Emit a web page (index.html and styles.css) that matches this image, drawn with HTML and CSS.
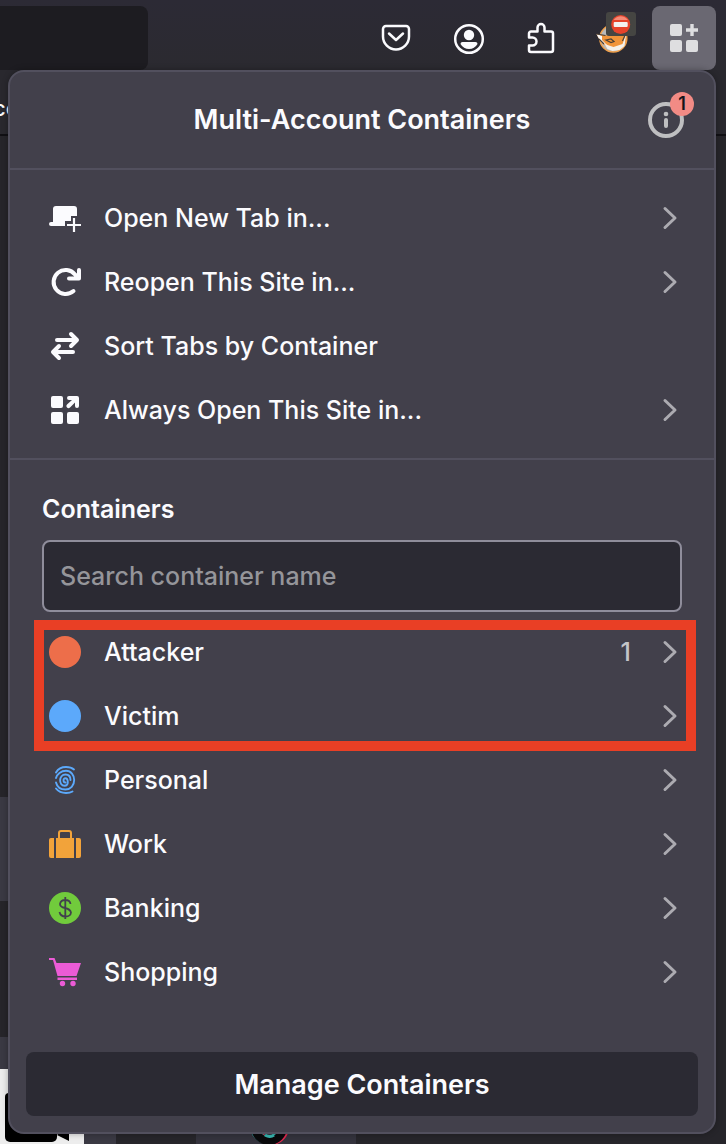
FILE: index.html
```html
<!DOCTYPE html>
<html lang="en">
<head>
<meta charset="utf-8">
<meta name="viewport" content="width=device-width, initial-scale=1">
<title>Multi-Account Containers</title>
<link rel="stylesheet" href="styles.css">
</head>
<body>
<svg class="defs" aria-hidden="true">
  <symbol id="chevron" viewBox="0 0 16 24"><path d="M3 2.500 L13 12 L3 21.500" fill="none" stroke="currentColor" stroke-width="3" stroke-linecap="round" stroke-linejoin="round"/></symbol>
</svg>
<div class="browser">
  <header class="toolbar">
    <div class="urlbar"></div>
    <nav class="tools" aria-label="Toolbar">
      <button class="tool" aria-label="Save to Pocket">
        <svg width="32" height="32" viewBox="0 0 32 32" fill="none" stroke="currentColor" stroke-width="2.500" stroke-linecap="round" stroke-linejoin="round"><path d="M6 4H26a3 3 0 0 1 3 3V14.500a13 13 0 0 1-26 0V7a3 3 0 0 1 3-3Z"/><path d="M9 11.500l7 6.500 7-6.500"/></svg>
      </button>
      <button class="tool" aria-label="Account">
        <svg width="32" height="32" viewBox="-1 -1 32 32"><circle cx="16" cy="16" r="13.800" fill="none" stroke="currentColor" stroke-width="2.500"/><circle cx="16" cy="12" r="5.200" fill="currentColor"/><path d="M9.500 19H22.500a2 2 0 0 1 2 2Q21.500 26 16 26T7.500 21a2 2 0 0 1 2-2Z" fill="currentColor"/></svg>
      </button>
      <button class="tool" aria-label="Extensions">
        <svg width="32" height="32" viewBox="-1 -1 32 32" fill="none" stroke="currentColor" stroke-width="2.500" stroke-linejoin="round"><path d="M6 8.500H12.500V4.500a3.500 3.500 0 0 1 7 0V8.500H26a2 2 0 0 1 2 2V27a2 2 0 0 1-2 2H6a2 2 0 0 1-2-2V22.500H7.500a4 4 0 0 0 0-8H4V10.500a2 2 0 0 1 2-2Z"/></svg>
      </button>
      <button class="tool" aria-label="FoxyProxy">
        <svg width="44" height="44" viewBox="0 0 44 44"><circle cx="23.300" cy="22.500" r="13.500" fill="#b9b9b9" stroke="#f0a04b" stroke-width="1.500"/><path d="M6.500 18L17 19.500 29 17 36.500 16 36 26 31 30 21 32 14 29 10 25z" fill="#f0943a"/><path d="M6.500 18l5.500 2 0 4 6 6-7-4-3-5z" fill="#fafafa"/><path d="M36.500 16l-4 12-9 3-9-3 3 5 5 2 7-1 5-4z" fill="#f4f0ea"/><path d="M6.500 18l9 1.500M9 23l5 5M16 24l5-1 3 2.500-3 1zM36.500 16l-4 9" fill="none" stroke="#4b4036" stroke-width="1.200"/><rect x="16" y="-4" width="30" height="24" rx="3" fill="#454542"/><circle cx="30.700" cy="8.500" r="9.500" fill="#e6432b"/><path d="M23.500 4a9 9 0 0 1 14.500 0z" fill="#f68a76"/><rect x="23.700" y="6" width="14" height="5" rx="1" fill="#f3f1f0"/></svg>
      </button>
      <button class="tool tool-active" aria-label="Multi-Account Containers">
        <svg width="32" height="32" viewBox="0 0 32 32" fill="#dedee0"><rect x="2" y="2" width="12" height="12" rx="2"/><rect x="2" y="18" width="12" height="12" rx="2"/><rect x="18" y="18" width="12" height="12" rx="2"/><path d="M22.300 2h3.400v4.300H30v3.400h-4.300V14h-3.400V9.700H18V6.300h4.300z"/></svg>
      </button>
    </nav>
  </header>
  <div class="bookmarks">cc</div>
  <main class="page">
    <div class="band band-a"></div>
    <div class="band band-b"></div>
    <div class="band band-c"></div>
    <div class="tiles">
      <div class="thumb"><svg width="84" height="75" viewBox="0 0 84 75"><rect x="5" y="24" width="52" height="18" rx="4"/><rect x="5" y="34" width="52" height="39" rx="5"/><path d="M57 66l12-12v18z"/></svg></div>
      <div class="tile-logo"><svg width="40" height="75" viewBox="0 0 40 75" fill="none" stroke-width="8"><circle cx="21" cy="58" r="14" stroke="#e0284f"/><circle cx="18" cy="57" r="14" stroke="#38b8b2"/><circle cx="19" cy="58" r="14" stroke="#09090b"/><path d="M15 66q5 3 9 0" stroke="#38b8b2" stroke-width="3"/></svg></div>
    </div>
  </main>
</div>

<section class="panel" aria-labelledby="title">
  <header class="panel-head">
    <h1 id="title">Multi-Account Containers</h1>
    <button class="info" aria-label="What's new">
      <svg width="36" height="36" viewBox="0 0 36 36"><circle cx="18" cy="18" r="16" fill="none" stroke="currentColor" stroke-width="4"/><circle cx="18" cy="12" r="2.300" fill="currentColor"/><rect x="16" y="16" width="4" height="10" rx="2" fill="currentColor"/></svg>
      <span class="badge">1</span>
    </button>
  </header>
  <nav class="menu">
    <button class="row"><svg class="icon" viewBox="0 0 32 32"><path d="M7 4H25a3 3 0 0 1 3 3V14H22V19H16V24H2a2 2 0 0 1 0-4H4V7a3 3 0 0 1 3-3Z" fill="currentColor"/><path d="M25 16V30M18 23H32" stroke="currentColor" stroke-width="2.200"/></svg><span class="label">Open New Tab in...</span><svg class="chevron"><use href="#chevron"/></svg></button>
    <button class="row"><svg class="icon" viewBox="0 0 32 32"><path d="M24.500 25A12 12 0 1 1 26 8.500L29 12" fill="none" stroke="currentColor" stroke-width="4" stroke-linecap="round"/><path d="M20 10.500h5L28 7V4a2 2 0 0 1 4 0V12.500a2 2 0 0 1-2 2H20a2 2 0 0 1 0-4Z" fill="currentColor"/></svg><span class="label">Reopen This Site in...</span><svg class="chevron"><use href="#chevron"/></svg></button>
    <button class="row"><svg class="icon" viewBox="0 0 32 32" fill="none" stroke="currentColor" stroke-width="4" stroke-linecap="round" stroke-linejoin="round"><path d="M8 10H27M22 4l6 6-6 6M24 22H5M10 16l-6 6 6 6"/></svg><span class="label">Sort Tabs by Container</span></button>
    <button class="row"><svg class="icon" viewBox="0 0 32 32" fill="currentColor"><rect x="2" y="2" width="12" height="12" rx="2"/><rect x="2" y="18" width="12" height="12" rx="2"/><rect x="18" y="18" width="12" height="12" rx="2"/><path d="M20 2h8a2 2 0 0 1 2 2v8a2 2 0 0 1-4 0V8.500l-5 5a2 2 0 0 1-3-3L23 6h-3a2 2 0 0 1 0-4Z"/></svg><span class="label">Always Open This Site in...</span><svg class="chevron"><use href="#chevron"/></svg></button>
  </nav>
  <div class="search">
    <label for="search">Containers</label>
    <input id="search" type="text" placeholder="Search container name">
  </div>
  <div class="list">
    <div class="highlight">
      <button class="row"><svg class="icon" viewBox="0 0 32 32"><circle cx="16" cy="16" r="16" fill="#ed6e4a"/></svg><span class="label">Attacker</span><span class="count">1</span><svg class="chevron"><use href="#chevron"/></svg></button>
      <button class="row"><svg class="icon" viewBox="0 0 32 32"><circle cx="16" cy="16" r="16" fill="#5ca9fb"/></svg><span class="label">Victim</span><svg class="chevron"><use href="#chevron"/></svg></button>
    </div>
    <button class="row"><svg class="icon" viewBox="0 0 32 32" fill="none" stroke="#5ca9fb" stroke-width="1.900" stroke-linecap="round"><path d="M7 8.500C9 5 13 3 17 3Q22 3 25 5.500"/><path d="M7 14C8 10 12 6.800 17 6.800 22 6.800 25.200 11 25.200 16 25.200 21.500 21.500 25.500 16.500 25.500 11.500 25.500 8 22.500 7 18.500"/><path d="M7 24.500Q10.500 29 17 29 21 29 23.500 27.500"/><path d="M16.500 18.500C14 18.500 13.700 14.200 16.500 14.200 19 14.200 20.500 21.800 15.500 21.800 9.500 21.800 9.500 10.500 16.500 10.500 19.500 10.500 21.500 12.500 21.500 16"/></svg><span class="label">Personal</span><svg class="chevron"><use href="#chevron"/></svg></button>
    <button class="row"><svg class="icon" viewBox="0 0 32 32" fill="#f2a33a"><path d="M2 10H5V30H2a2 2 0 0 1-2-2V12a2 2 0 0 1 2-2ZM27 10H30a2 2 0 0 1 2 2V28a2 2 0 0 1-2 2H27ZM7 10H9V5a3 3 0 0 1 3-3H20a3 3 0 0 1 3 3V10H25V30H7ZM11 10H21V5a1 1 0 0 0-1-1H12a1 1 0 0 0-1 1Z" fill-rule="evenodd"/></svg><span class="label">Work</span><svg class="chevron"><use href="#chevron"/></svg></button>
    <button class="row"><svg class="icon" viewBox="0 0 32 32"><circle cx="16" cy="16" r="16" fill="#71cb3c"/><path d="M21.500 12Q21 8 16.300 8T11 12Q11 15 16 16T22 20.500Q21.500 24.500 16.500 24.500T10.500 20M16.300 5V27" fill="none" stroke="#42414d" stroke-width="1.800"/></svg><span class="label">Banking</span><svg class="chevron"><use href="#chevron"/></svg></button>
    <button class="row"><svg class="icon" viewBox="0 0 32 32" fill="#eb5bd6"><path d="M0 2H5.500L7.500 7H32L27.500 20H8.500L4 4H0ZM8.500 21.500H28V24H8.500Z"/><circle cx="13.500" cy="27.500" r="2.700"/><circle cx="24" cy="27.500" r="2.700"/></svg><span class="label">Shopping</span><svg class="chevron"><use href="#chevron"/></svg></button>
  </div>
  <footer class="panel-foot"><button class="manage">Manage Containers</button></footer>
</section>
</body>
</html>
```

FILE: styles.css
```css
* { box-sizing: border-box; }

body {
  margin: 0;
  position: relative;
  min-height: 100vh;
  background: #26252a;
  color: #fbfbfe;
  font-family: Inter, "Liberation Sans", sans-serif;
  font-size: 25px;
  font-weight: 500;
}

button {
  margin: 0;
  padding: 0;
  border: 0;
  background: none;
  color: inherit;
  font: inherit;
}

.defs { position: absolute; width: 0; height: 0; }

.browser { display: flex; flex-direction: column; min-height: 100vh; }

.toolbar {
  display: flex;
  justify-content: space-between;
  height: 70px;
  padding: 6px 10px 0 0;
  background: linear-gradient(#2c2a35, #2b2a30);
}

.urlbar { width: 148px; border-radius: 0 8px 8px 0; background: #1d1c21; }
.tools { display: flex; gap: 8px; }

.tool {
  display: grid;
  place-items: center;
  width: 64px;
  height: 64px;
  border-radius: 8px;
}

.tool svg { overflow: visible; }
.tool-active { background: #6a6872; }

.bookmarks {
  height: 66px;
  padding-top: 24px;
  border-bottom: 2px solid #111014;
  background: #29282e;
  font-size: 22px;
  line-height: 28px;
  text-indent: -7px;
}

.page { flex: 1; display: flex; flex-direction: column; }
.band { width: 50%; }
.band-a { height: 661px; }
.band-b { height: 104px; background: #3a3943; }
.band-c { height: 136px; }

.tiles {
  flex: 1;
  display: flex;
  gap: 112px;
  max-height: 107px;
  padding-top: 32px;
  overflow: hidden;
  background: linear-gradient(#3a3943, #3a3943) 0 0 / 116px 100% no-repeat;
}

.tiles svg { display: block; }
.thumb { width: 84px; height: 75px; background: #ededed; }
.tile-logo { width: 160px; padding-left: 54px; background: #34333d; }

.panel {
  position: absolute;
  top: 70px;
  left: 8px;
  right: 10px;
  border: 2px solid #52505e;
  border-radius: 16px;
  background: #42404b;
  box-shadow: 0 0 6px rgba(0, 0, 0, 0.3);
}

.panel-head {
  display: grid;
  grid-template-columns: 1fr auto 1fr;
  align-items: center;
  height: 98px;
  padding: 0 30px;
  border-bottom: 2px solid #52505e;
}

h1 {
  grid-column: 2;
  margin: 0;
  font-size: 27px;
  font-weight: 600;
  line-height: 36px;
}

.info { position: relative; justify-self: end; width: 36px; height: 36px; color: #bfbfc1; }
.info svg { display: block; }

.badge {
  position: absolute;
  top: -10px;
  right: -10px;
  width: 24px;
  height: 24px;
  border-radius: 50%;
  background: #f28b85;
  color: #15141a;
  font-size: 18px;
  font-weight: 600;
  line-height: 24px;
  text-align: center;
}

.menu { padding: 16px 0; border-bottom: 2px solid #52505e; }

.row {
  display: flex;
  align-items: center;
  width: 100%;
  height: 64px;
  padding: 0 36px 0 39px;
  text-align: left;
}

.icon { flex: none; width: 32px; height: 32px; margin-right: 23px; }
.label { flex: 1; }
.count { margin-right: 31px; color: #c4c4c8; }
.chevron { flex: none; width: 16px; height: 24px; color: #acabb1; }

.search {
  display: flex;
  flex-direction: column;
  gap: 15px;
  padding: 33px 32px 8px;
}

.search label { font-weight: 600; line-height: 32px; }

.search input {
  width: 100%;
  height: 72px;
  padding: 0 16px;
  border: 2px solid #8f8d9b;
  border-radius: 8px;
  background: #2b2a33;
  color: inherit;
  font: inherit;
}

.search input::placeholder { color: #95959a; opacity: 1; }

.highlight { position: relative; }

.highlight::after {
  content: "";
  position: absolute;
  inset: 0 18px -3px 24px;
  border: 10px solid #e93f25;
  pointer-events: none;
}

.panel-foot { padding: 48px 16px 16px; }

.manage {
  width: 100%;
  height: 64px;
  border-radius: 8px;
  background: #2b2a33;
  font-size: 27px;
  font-weight: 600;
}
```
